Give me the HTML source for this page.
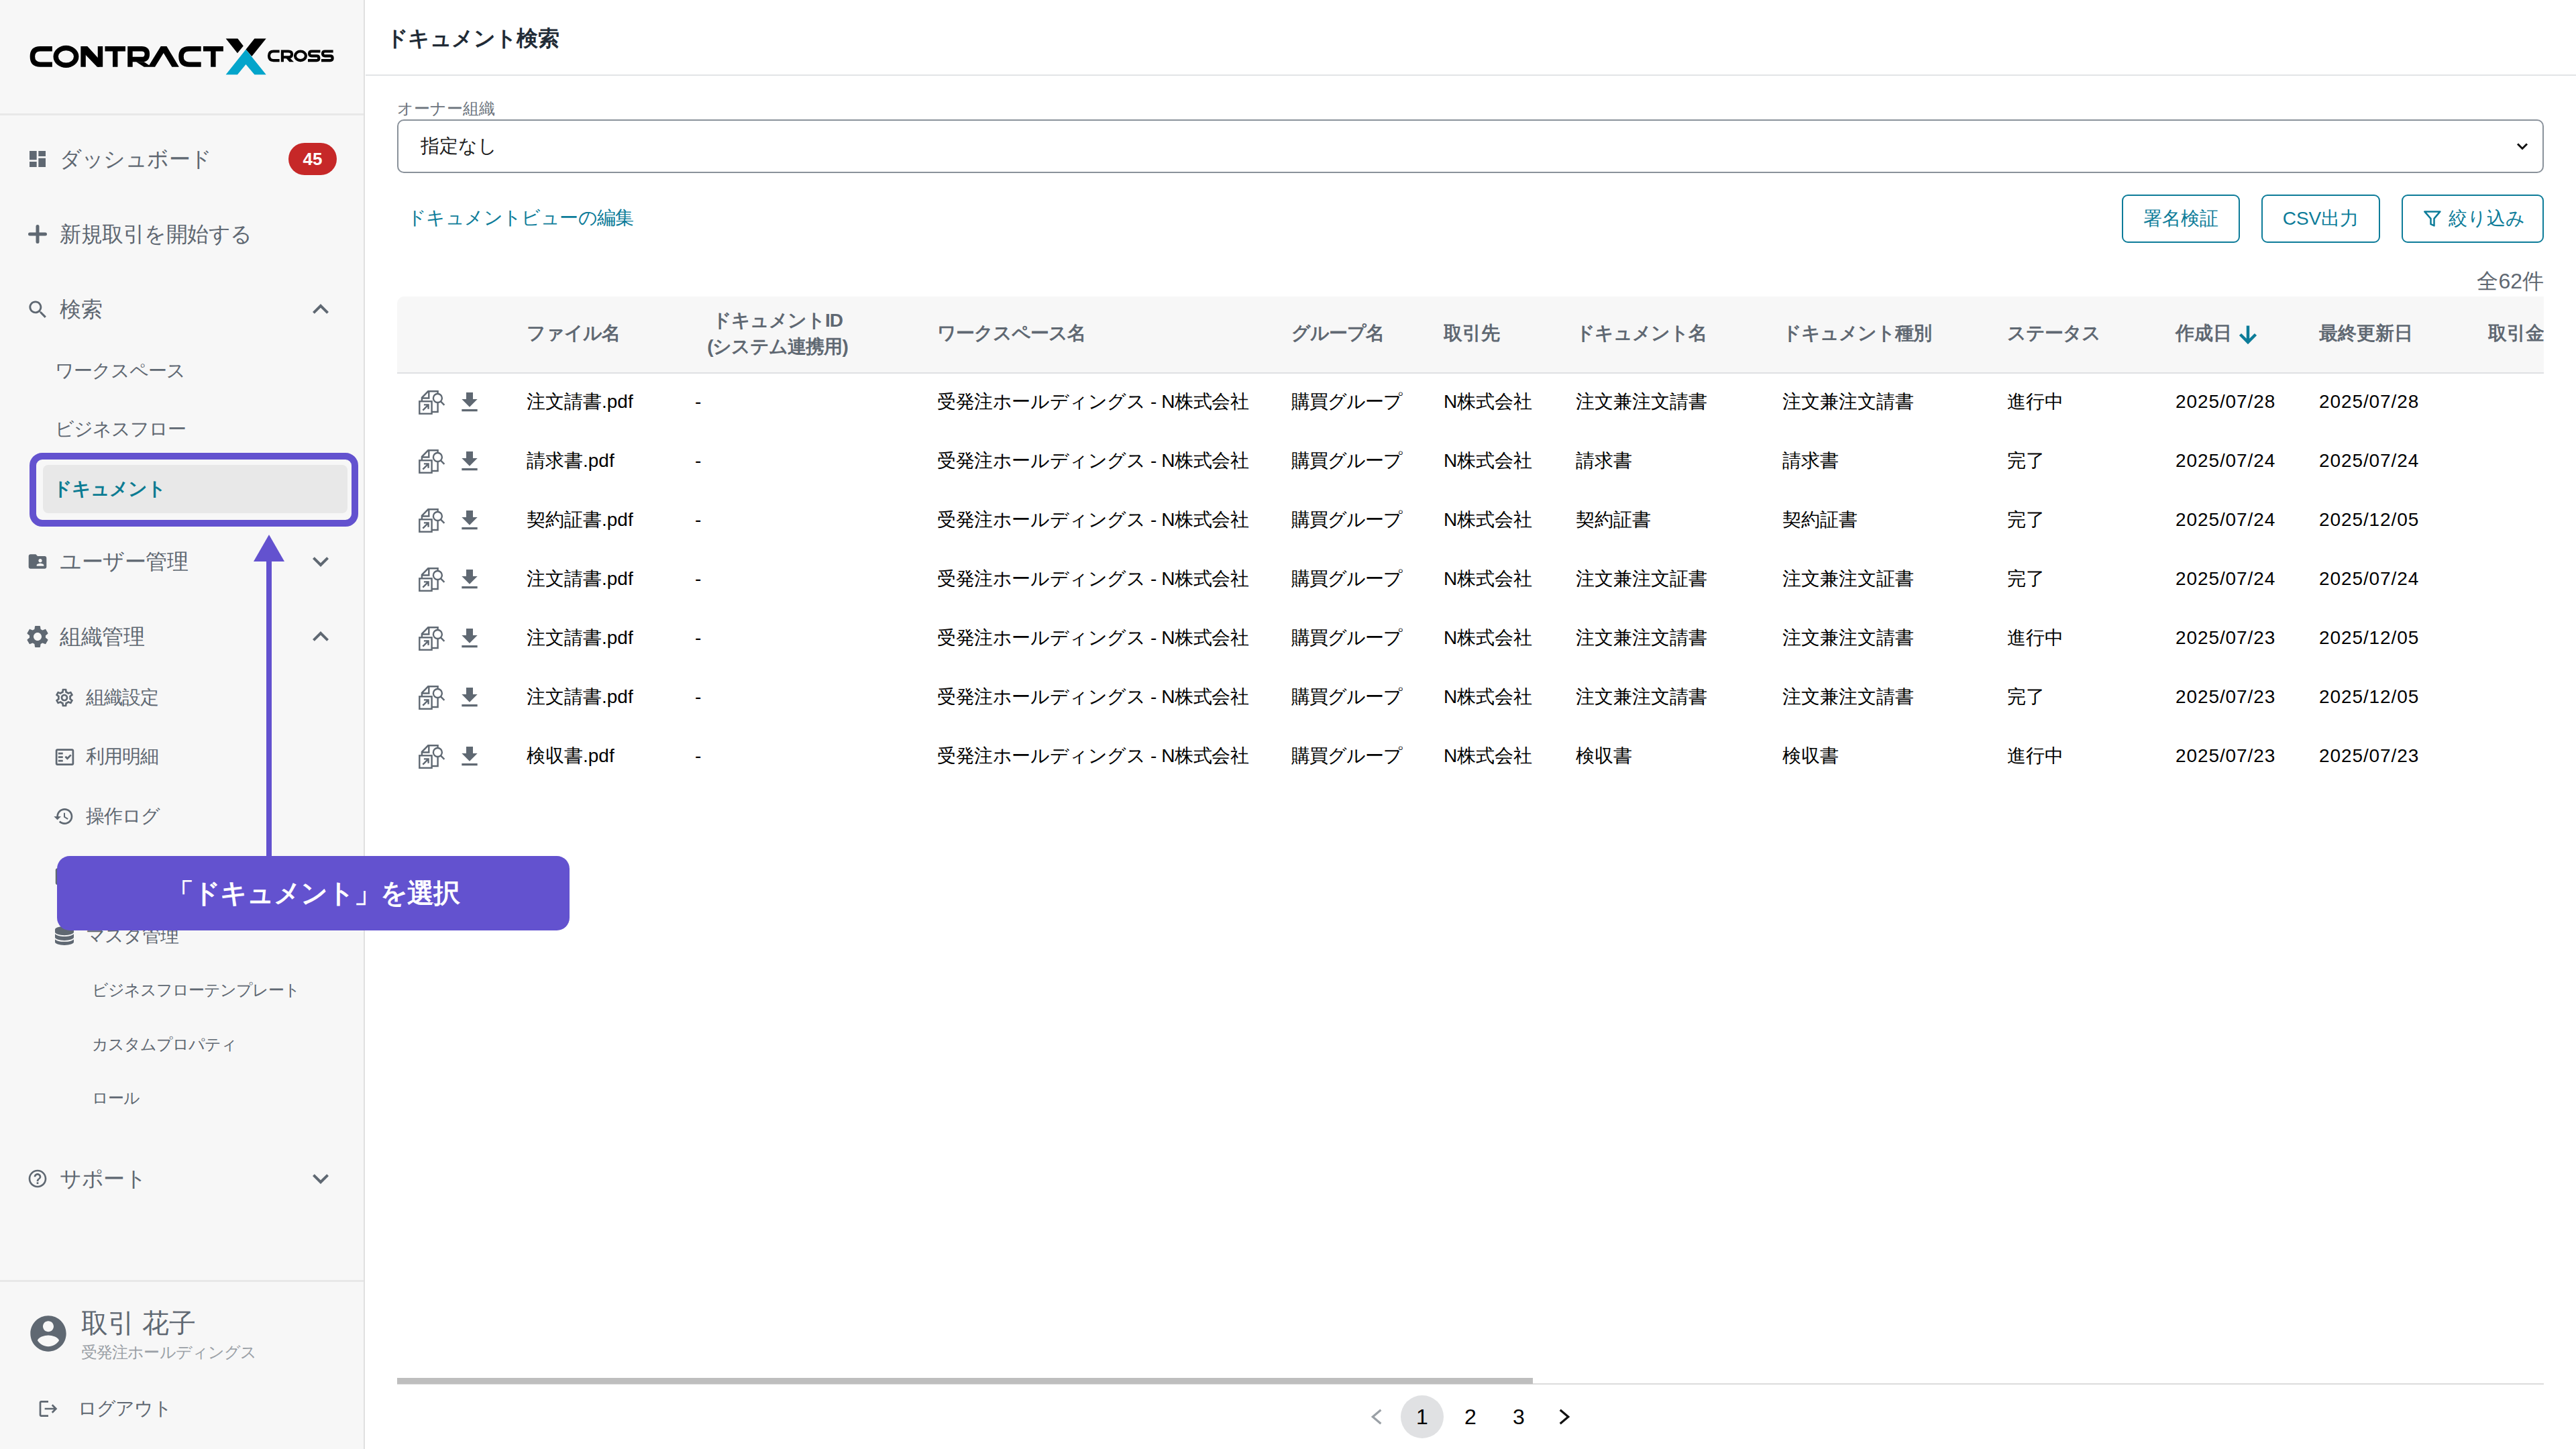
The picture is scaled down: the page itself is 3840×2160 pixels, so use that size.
<!DOCTYPE html>
<html lang="ja">
<head>
<meta charset="utf-8">
<title>ドキュメント検索</title>
<style>
*{box-sizing:border-box;margin:0;padding:0}
html,body{width:3840px;height:2160px;overflow:hidden;background:#fff}
body{font-family:"Liberation Sans",sans-serif;position:relative;color:#000}
.abs,.t,.m1,.m2,.m3,.th,.td,svg.i{position:absolute}
.t,.m1,.m2,.m3,.th,.td{white-space:nowrap}
#side{position:absolute;left:0;top:0;width:542px;height:2160px;background:#f7f7f7}
#sideb{position:absolute;left:542px;top:0;width:2px;height:2160px;background:#e0e0e0}
.hr{position:absolute;left:0;width:542px;height:3px;background:#e8e8e8}
.m1{font-size:32px;line-height:48px;color:#5f6872;left:89px;letter-spacing:-0.5px}
.m2{font-size:28px;line-height:44px;color:#5f6872;letter-spacing:-1px}
.m3{font-size:24px;line-height:40px;color:#5f6872;left:137px;letter-spacing:-1px}
svg.i{fill:#5f6872}
.th{font-size:28px;line-height:40px;font-weight:bold;color:#5f6872}
.td{font-size:28px;line-height:44px;color:#000}
.btn{position:absolute;top:290px;height:72px;border:2px solid #0d7c99;border-radius:9px;color:#0d7c99;font-size:28px;line-height:68px;text-align:center;white-space:nowrap}
.k{letter-spacing:-1px}.w{letter-spacing:-0.4px}.d{letter-spacing:0.9px}
</style>
</head>
<body>
<!-- SIDEBAR -->
<div id="side"></div>
<div id="sideb"></div>
<div class="hr" style="top:169px"></div>
<div class="hr" style="top:1908px"></div>
<svg class="abs" style="position:absolute;left:40px;top:55px" width="300" height="60" viewBox="0 0 2576 515">
<g fill="none" stroke="#000" stroke-width="64" stroke-linejoin="miter">
<path d="M325 152H170Q72 152 72 252Q72 353 170 353H325"/>
<ellipse cx="502" cy="252" rx="131" ry="111"/>
<path d="M722 385V120M940 385V120"/>
<path d="M1000 152H1262M1131 152V385"/>
<path d="M1322 385V152H1470Q1540 152 1540 220Q1540 288 1470 288H1322"/>
<path d="M2230 152H2075Q1975 152 1975 252Q1975 353 2075 353H2230"/>
<path d="M2258 152H2515M2386 152V385"/>
</g>
<path d="M700 120H775L930 290V385H900L700 175Z" fill="#000"/>
<path d="M1400 320H1500L1565 362L1715 120H1790L1948 385H1858L1750 205L1640 385H1500Z" fill="#000"/>
</svg>
<svg class="abs" style="position:absolute;left:320px;top:45px" width="190" height="80" viewBox="0 0 2576 1085">
<path d="M225 170H465L580 320L460 465Z" fill="#000"/>
<path d="M805 170H1040L750 530L630 390Z" fill="#000"/>
<path d="M630 390L1040 900H805L630 690L460 900H225Z" fill="#03a5cb"/>
<g fill="none" stroke="#000" stroke-width="56">
<path d="M1310 428H1190Q1098 428 1098 520Q1098 612 1190 612H1310"/>
<path d="M1368 640V428H1490Q1560 428 1560 487Q1560 546 1490 546H1368"/><path d="M1420 540H1500L1600 640H1510Z" fill="#000" stroke="none"/>
<ellipse cx="1735" cy="520" rx="108" ry="92"/>
<path d="M2135 428H1960Q1913 428 1913 474Q1913 520 1960 520H2060Q2107 520 2107 566Q2107 612 2060 612H1885"/>
<path d="M2395 428H2230Q2183 428 2183 474Q2183 520 2230 520H2335Q2382 520 2382 566Q2382 612 2335 612H2155"/>
</g>
</svg>
<svg class="i" style="left:40px;top:221px" width="32" height="32" viewBox="0 0 24 24"><path d="M3 13h8V3H3v10zm0 8h8v-6H3v6zm10 0h8V11h-8v10zm0-18v6h8V3h-8z"/></svg>
<div class="m1" style="top:213px">ダッシュボード</div>
<div class="abs" style="left:430px;top:213px;width:72px;height:48px;border-radius:24px;background:#c62828;color:#fff;font-weight:bold;font-size:26px;line-height:48px;text-align:center">45</div>
<svg class="i" style="left:40px;top:333px" width="32" height="32" viewBox="0 0 32 32"><path d="M16 4.500V27.500M4.500 16H27.500" stroke="#5f6872" stroke-width="5" stroke-linecap="round" fill="none"/></svg>
<div class="m1" style="top:325px">新規取引を開始する</div>
<svg class="i" style="left:39px;top:444px" width="35" height="35" viewBox="0 0 24 24"><path d="M15.5 14h-.79l-.28-.27C15.41 12.59 16 11.11 16 9.5 16 5.91 13.09 3 9.5 3S3 5.91 3 9.5 5.91 16 9.5 16c1.61 0 3.09-.59 4.23-1.57l.27.28v.79l5 4.99L20.49 19l-4.99-5zm-6 0C7.01 14 5 11.99 5 9.5S7.01 5 9.5 5 14 7.01 14 9.5 11.99 14 9.5 14z"/></svg>
<div class="m1" style="top:437px">検索</div>
<svg class="i" style="left:454px;top:437px" width="48" height="48" viewBox="0 0 24 24"><path d="M12 8l-6 6 1.41 1.41L12 10.83l4.59 4.58L18 14z"/></svg>
<div class="m2" style="top:531px;left:82px">ワークスペース</div>
<div class="m2" style="top:618px;left:82px">ビジネスフロー</div>
<div class="abs" style="left:44px;top:675px;width:490px;height:110px;border:10px solid #6352cf;border-radius:19px"></div>
<div class="abs" style="left:64px;top:693px;width:454px;height:72px;border-radius:8px;background:#e8e8e8"></div>
<div class="m2" style="top:707px;left:79px;color:#0b7b92;font-weight:bold">ドキュメント</div>
<svg class="i" style="left:40px;top:821px" width="32" height="32" viewBox="0 0 24 24"><path d="M20 6h-8l-2-2H4c-1.1 0-1.99.9-1.99 2L2 18c0 1.1.9 2 2 2h16c1.1 0 2-.9 2-2V8c0-1.1-.9-2-2-2zm-5 3c1.1 0 2 .9 2 2s-.9 2-2 2-2-.9-2-2 .9-2 2-2zm4 8h-8v-1c0-1.33 2.67-2 4-2s4 .67 4 2v1z"/></svg>
<div class="m1" style="top:813px">ユーザー管理</div>
<svg class="i" style="left:454px;top:813px" width="48" height="48" viewBox="0 0 24 24"><path d="M16.59 8.59L12 13.17 7.41 8.59 6 10l6 6 6-6z"/></svg>
<svg class="i" style="left:36px;top:929px" width="40" height="40" viewBox="0 0 24 24"><path d="M19.14 12.94c.04-.3.06-.61.06-.94 0-.32-.02-.64-.07-.94l2.03-1.58c.18-.14.23-.41.12-.61l-1.92-3.32c-.12-.22-.37-.29-.59-.22l-2.39.96c-.5-.38-1.03-.7-1.62-.94l-.36-2.54c-.04-.24-.24-.41-.48-.41h-3.84c-.24 0-.43.17-.47.41l-.36 2.54c-.59.24-1.13.57-1.62.94l-2.39-.96c-.22-.08-.47 0-.59.22L2.74 8.87c-.12.21-.08.47.12.61l2.03 1.58c-.05.3-.09.63-.09.94s.02.64.07.94l-2.03 1.58c-.18.14-.23.41-.12.61l1.92 3.32c.12.22.37.29.59.22l2.39-.96c.5.38 1.03.7 1.62.94l.36 2.54c.05.24.24.41.48.41h3.84c.24 0 .44-.17.47-.41l.36-2.54c.59-.24 1.13-.56 1.62-.94l2.39.96c.22.08.47 0 .59-.22l1.92-3.32c.12-.22.07-.47-.12-.61l-2.01-1.58zM12 15.6c-1.98 0-3.6-1.62-3.6-3.6s1.62-3.6 3.6-3.6 3.6 1.62 3.6 3.6-1.62 3.6-3.6 3.6z"/></svg>
<div class="m1" style="top:925px">組織管理</div>
<svg class="i" style="left:454px;top:925px" width="48" height="48" viewBox="0 0 24 24"><path d="M12 8l-6 6 1.41 1.41L12 10.83l4.59 4.58L18 14z"/></svg>
<svg class="i" style="left:80px;top:1024px" width="32" height="32" viewBox="0 0 24 24"><path d="M19.43 12.98c.04-.32.07-.64.07-.98 0-.34-.03-.66-.07-.98l2.11-1.65c.19-.15.24-.42.12-.64l-2-3.46c-.09-.16-.26-.25-.44-.25-.06 0-.12.01-.17.03l-2.49 1c-.52-.4-1.08-.73-1.69-.98l-.38-2.65C14.46 2.18 14.25 2 14 2h-4c-.25 0-.46.18-.49.42l-.38 2.65c-.61.25-1.17.59-1.69.98l-2.49-1c-.06-.02-.12-.03-.18-.03-.17 0-.34.09-.43.25l-2 3.46c-.13.22-.07.49.12.64l2.11 1.65c-.04.32-.07.65-.07.98 0 .33.03.66.07.98l-2.11 1.65c-.19.15-.24.42-.12.64l2 3.46c.09.16.26.25.44.25.06 0 .12-.01.17-.03l2.49-1c.52.4 1.08.73 1.69.98l.38 2.65c.03.24.24.42.49.42h4c.25 0 .46-.18.49-.42l.38-2.65c.61-.25 1.17-.59 1.69-.98l2.49 1c.06.02.12.03.18.03.17 0 .34-.09.43-.25l2-3.46c.12-.22.07-.49-.12-.64l-2.11-1.65zm-1.98-1.71c.04.31.05.52.05.73 0 .21-.02.43-.05.73l-.14 1.13.89.7 1.08.84-.7 1.21-1.27-.51-1.04-.42-.9.68c-.43.32-.84.56-1.25.73l-1.06.43-.16 1.13-.2 1.35h-1.4l-.19-1.35-.16-1.13-1.06-.43c-.43-.18-.83-.41-1.23-.71l-.91-.7-1.06.43-1.27.51-.7-1.21 1.08-.84.89-.7-.14-1.13c-.03-.31-.05-.54-.05-.74s.02-.43.05-.73l.14-1.13-.89-.7-1.08-.84.7-1.21 1.27.51 1.04.42.9-.68c.43-.32.84-.56 1.25-.73l1.06-.43.16-1.13.2-1.35h1.39l.19 1.35.16 1.13 1.06.43c.43.18.83.41 1.23.71l.91.7 1.06-.43 1.27-.51.7 1.21-1.07.85-.89.7.14 1.13zM12 8c-2.21 0-4 1.79-4 4s1.79 4 4 4 4-1.79 4-4-1.79-4-4-4zm0 6c-1.1 0-2-.9-2-2s.9-2 2-2 2 .9 2 2-.9 2-2 2z"/></svg>
<div class="m2" style="top:1018px;left:128px">組織設定</div>
<svg class="i" style="left:79.5px;top:1111.5px" width="33" height="33" viewBox="0 0 24 24"><path d="M20 3H4c-1.1 0-2 .9-2 2v14c0 1.1.9 2 2 2h16c1.1 0 2-.9 2-2V5c0-1.1-.9-2-2-2zm0 16H4V5h16v14zM19.41 10.42L17.99 9l-3.17 3.17-1.41-1.42L12 12.16 14.82 15zM5 7h5v2H5zM5 11h5v2H5zM5 15h5v2H5z"/></svg>
<div class="m2" style="top:1106px;left:128px">利用明細</div>
<svg class="i" style="left:79px;top:1201px" width="32" height="32" viewBox="0 0 24 24"><path d="M13 3c-4.97 0-9 4.03-9 9H1l3.89 3.89.07.14L9 12H6c0-3.87 3.13-7 7-7s7 3.13 7 7-3.13 7-7 7c-1.93 0-3.68-.79-4.94-2.06l-1.42 1.42C8.27 19.990 10.51 21 13 21c4.97 0 9-4.03 9-9s-4.03-9-9-9zm-1 5v5l4.28 2.54.72-1.21-3.5-2.08V8H12z"/></svg>
<div class="m2" style="top:1195px;left:128px">操作ログ</div>
<svg class="i" style="left:79.5px;top:1289.5px" width="33" height="33" viewBox="0 0 24 24"><path d="M20 3H4c-1.1 0-2 .9-2 2v14c0 1.1.9 2 2 2h16c1.1 0 2-.9 2-2V5c0-1.1-.9-2-2-2zm0 16H4V5h16v14zM19.41 10.42L17.99 9l-3.17 3.17-1.41-1.42L12 12.16 14.82 15zM5 7h5v2H5zM5 11h5v2H5zM5 15h5v2H5z"/></svg>
<div class="m2" style="top:1284px;left:128px">ワークフロー</div>
<svg class="i" style="left:82px;top:1381px" width="28" height="28" viewBox="4 3 16 18" preserveAspectRatio="none"><path d="M12 3C7.58 3 4 4.34 4 6v2.500C4 10.160 7.580 11.500 12 11.500S20 10.160 20 8.500V6c0-1.660-3.580-3-8-3zM4 10.300v3.200c0 1.660 3.580 3 8 3s8-1.340 8-3v-3.200c-1.300 1.500-4.500 2.400-8 2.400s-6.700-.9-8-2.400zM4 15.300V18c0 1.660 3.580 3 8 3s8-1.340 8-3v-2.700c-1.300 1.500-4.500 2.400-8 2.400s-6.700-.9-8-2.400z"/></svg>
<div class="m2" style="top:1373px;left:128px">マスタ管理</div>
<div class="m3" style="top:1456px">ビジネスフローテンプレート</div>
<div class="m3" style="top:1537px">カスタムプロパティ</div>
<div class="m3" style="top:1617px">ロール</div>
<svg class="i" style="left:40px;top:1741px" width="32" height="32" viewBox="0 0 24 24"><path d="M11 18h2v-2h-2v2zm1-16C6.48 2 2 6.48 2 12s4.48 10 10 10 10-4.48 10-10S17.520 2 12 2zm0 18c-4.410 0-8-3.590-8-8s3.590-8 8-8 8 3.590 8 8-3.590 8-8 8zm0-14c-2.210 0-4 1.790-4 4h2c0-1.100.9-2 2-2s2 .9 2 2c0 2-3 1.750-3 5h2c0-2.250 3-2.500 3-5 0-2.210-1.790-4-4-4z"/></svg>
<div class="m1" style="top:1733px">サポート</div>
<svg class="i" style="left:454px;top:1733px" width="48" height="48" viewBox="0 0 24 24"><path d="M16.59 8.59L12 13.17 7.41 8.59 6 10l6 6 6-6z"/></svg>
<svg class="i" style="left:40px;top:1955.5px" width="64" height="64" viewBox="0 0 24 24"><path d="M12 2C6.48 2 2 6.48 2 12s4.48 10 10 10 10-4.48 10-10S17.52 2 12 2zm0 3c1.66 0 3 1.34 3 3s-1.34 3-3 3-3-1.34-3-3 1.340-3 3-3zm0 14.200c-2.500 0-4.710-1.280-6-3.220.03-1.990 4-3.080 6-3.080 1.990 0 5.970 1.090 6 3.080-1.290 1.940-3.500 3.220-6 3.220z"/></svg>
<div class="t" style="left:121px;top:1944px;font-size:40px;line-height:56px;color:#5f6872">取引 花子</div>
<div class="t" style="left:121px;top:1998px;font-size:24px;line-height:36px;color:#9aa0a6;letter-spacing:-0.9px">受発注ホールディングス</div>
<svg class="i" style="left:55.5px;top:2084px" width="32" height="32" viewBox="0 0 24 24"><path d="M17 7l-1.410 1.410L18.170 11H8v2h10.170l-2.580 2.580L17 17l5-5zM4 5h8V3H4c-1.100 0-2 .9-2 2v14c0 1.100.9 2 2 2h8v-2H4V5z"/></svg>
<div class="m2" style="top:2078px;left:116px">ログアウト</div>
<!-- MAIN -->
<svg width="0" height="0" style="position:absolute"><defs><g id="pv" fill="none" stroke="#5f6872" stroke-width="2.400">
<path d="M30.600 7.500V4.300H16.200L6.900 13.800V19"/><path d="M17.300 4.300V14.500H6.900"/><path d="M30.600 21.500V35H22"/>
<rect x="3.300" y="19.300" width="18.300" height="18.400"/><path d="M8.300 32.700L16.600 24.400M9.900 24.400H16.600V30.800"/>
<circle cx="30.400" cy="14.500" r="6.500"/><path d="M35.200 19.600L40.400 24.800"/></g></defs></svg>
<div class="t" style="left:576px;top:33px;font-size:32px;line-height:48px;font-weight:bold;color:#212b36;letter-spacing:-0.6px">ドキュメント検索</div>
<div class="abs" style="left:545px;top:111px;width:3295px;height:2px;background:#e2e4e6"></div>
<div class="t" style="left:592px;top:144px;font-size:24px;line-height:36px;color:#6b737c">オーナー組織</div>
<div class="abs" style="left:592px;top:178px;width:3200px;height:80px;border:2px solid #8a929b;border-radius:10px;background:#fff"></div>
<div class="t" style="left:627px;top:196px;font-size:28px;line-height:44px;color:#1c1c1c">指定なし</div>
<svg class="i" style="left:3748px;top:209px" width="24" height="18" viewBox="0 0 24 18"><path d="M5 5.500L12 12.500L19 5.500" fill="none" stroke="#111" stroke-width="3"/></svg>
<div class="t" style="left:607px;top:303px;font-size:28px;line-height:44px;color:#0d7c99;letter-spacing:-0.6px">ドキュメントビューの編集</div>
<div class="btn" style="left:3163px;width:176px">署名検証</div>
<div class="btn" style="left:3371px;width:177px">CSV出力</div>
<div class="btn" style="left:3580px;width:212px;text-align:left;padding-left:68px">絞り込み</div>
<svg class="i" style="left:3609px;top:310px" width="34" height="32" viewBox="0 0 34 32"><path d="M5.300 5.400H28.400L19.500 15.900V26.400L14.500 24.200V15.900Z" fill="none" stroke="#0d7c99" stroke-width="2.500" stroke-linejoin="round"/></svg>
<div class="t" style="right:48px;top:395px;font-size:32px;line-height:48px;color:#5f6872">全62件</div>
<div class="abs" style="left:592px;top:442px;width:3200px;height:113px;background:#f7f7f7;border-radius:10px 0 0 0"></div>
<div class="abs" style="left:592px;top:555px;width:3200px;height:2px;background:#dfe1e3"></div>
<div class="th k" style="left:785px;top:477px;">ファイル名</div>
<div class="th k" style="left:1009px;top:458px;width:300px;text-align:center;line-height:39px">ドキュメントID<br>(システム連携用)</div>
<div class="th k" style="left:1397px;top:477px;">ワークスペース名</div>
<div class="th k" style="left:1925px;top:477px;">グループ名</div>
<div class="th" style="left:2152px;top:477px;">取引先</div>
<div class="th k" style="left:2349px;top:477px;">ドキュメント名</div>
<div class="th k" style="left:2657px;top:477px;">ドキュメント種別</div>
<div class="th k" style="left:2992px;top:477px;">ステータス</div>
<div class="th" style="left:3243px;top:477px;">作成日</div>
<svg class="i" style="left:3333px;top:480px" width="36" height="36" viewBox="0 0 36 36"><path d="M18 5.500V29M6.500 18.500L18 30L29.500 18.500" fill="none" stroke="#0d7c99" stroke-width="4.500"/></svg>
<div class="th" style="left:3457px;top:477px;">最終更新日</div>
<div class="abs" style="left:3700px;top:470px;width:92px;height:60px;overflow:hidden"><div class="th" style="left:9px;top:7px">取引金額</div></div>
<svg class="i" style="left:622px;top:579px" width="42" height="40"><use href="#pv"/></svg>
<svg class="i" style="left:680px;top:580px" width="40" height="40" viewBox="0 0 24 24"><path d="M19 9h-4V3H9v6H5l7 7 7-7zM5 18v2h14v-2H5z"/></svg>
<div class="td" style="left:785px;top:577px">注文請書.pdf</div>
<div class="td" style="left:1036px;top:577px">-</div>
<div class="td w" style="left:1397px;top:577px">受発注ホールディングス - N株式会社</div>
<div class="td k" style="left:1925px;top:577px">購買グループ</div>
<div class="td" style="left:2152px;top:577px">N株式会社</div>
<div class="td" style="left:2349px;top:577px">注文兼注文請書</div>
<div class="td" style="left:2657px;top:577px">注文兼注文請書</div>
<div class="td" style="left:2992px;top:577px">進行中</div>
<div class="td d" style="left:3243px;top:577px">2025/07/28</div>
<div class="td d" style="left:3457px;top:577px">2025/07/28</div>
<svg class="i" style="left:622px;top:667px" width="42" height="40"><use href="#pv"/></svg>
<svg class="i" style="left:680px;top:668px" width="40" height="40" viewBox="0 0 24 24"><path d="M19 9h-4V3H9v6H5l7 7 7-7zM5 18v2h14v-2H5z"/></svg>
<div class="td" style="left:785px;top:665px">請求書.pdf</div>
<div class="td" style="left:1036px;top:665px">-</div>
<div class="td w" style="left:1397px;top:665px">受発注ホールディングス - N株式会社</div>
<div class="td k" style="left:1925px;top:665px">購買グループ</div>
<div class="td" style="left:2152px;top:665px">N株式会社</div>
<div class="td" style="left:2349px;top:665px">請求書</div>
<div class="td" style="left:2657px;top:665px">請求書</div>
<div class="td" style="left:2992px;top:665px">完了</div>
<div class="td d" style="left:3243px;top:665px">2025/07/24</div>
<div class="td d" style="left:3457px;top:665px">2025/07/24</div>
<svg class="i" style="left:622px;top:755px" width="42" height="40"><use href="#pv"/></svg>
<svg class="i" style="left:680px;top:756px" width="40" height="40" viewBox="0 0 24 24"><path d="M19 9h-4V3H9v6H5l7 7 7-7zM5 18v2h14v-2H5z"/></svg>
<div class="td" style="left:785px;top:753px">契約証書.pdf</div>
<div class="td" style="left:1036px;top:753px">-</div>
<div class="td w" style="left:1397px;top:753px">受発注ホールディングス - N株式会社</div>
<div class="td k" style="left:1925px;top:753px">購買グループ</div>
<div class="td" style="left:2152px;top:753px">N株式会社</div>
<div class="td" style="left:2349px;top:753px">契約証書</div>
<div class="td" style="left:2657px;top:753px">契約証書</div>
<div class="td" style="left:2992px;top:753px">完了</div>
<div class="td d" style="left:3243px;top:753px">2025/07/24</div>
<div class="td d" style="left:3457px;top:753px">2025/12/05</div>
<svg class="i" style="left:622px;top:843px" width="42" height="40"><use href="#pv"/></svg>
<svg class="i" style="left:680px;top:844px" width="40" height="40" viewBox="0 0 24 24"><path d="M19 9h-4V3H9v6H5l7 7 7-7zM5 18v2h14v-2H5z"/></svg>
<div class="td" style="left:785px;top:841px">注文請書.pdf</div>
<div class="td" style="left:1036px;top:841px">-</div>
<div class="td w" style="left:1397px;top:841px">受発注ホールディングス - N株式会社</div>
<div class="td k" style="left:1925px;top:841px">購買グループ</div>
<div class="td" style="left:2152px;top:841px">N株式会社</div>
<div class="td" style="left:2349px;top:841px">注文兼注文証書</div>
<div class="td" style="left:2657px;top:841px">注文兼注文証書</div>
<div class="td" style="left:2992px;top:841px">完了</div>
<div class="td d" style="left:3243px;top:841px">2025/07/24</div>
<div class="td d" style="left:3457px;top:841px">2025/07/24</div>
<svg class="i" style="left:622px;top:931px" width="42" height="40"><use href="#pv"/></svg>
<svg class="i" style="left:680px;top:932px" width="40" height="40" viewBox="0 0 24 24"><path d="M19 9h-4V3H9v6H5l7 7 7-7zM5 18v2h14v-2H5z"/></svg>
<div class="td" style="left:785px;top:929px">注文請書.pdf</div>
<div class="td" style="left:1036px;top:929px">-</div>
<div class="td w" style="left:1397px;top:929px">受発注ホールディングス - N株式会社</div>
<div class="td k" style="left:1925px;top:929px">購買グループ</div>
<div class="td" style="left:2152px;top:929px">N株式会社</div>
<div class="td" style="left:2349px;top:929px">注文兼注文請書</div>
<div class="td" style="left:2657px;top:929px">注文兼注文請書</div>
<div class="td" style="left:2992px;top:929px">進行中</div>
<div class="td d" style="left:3243px;top:929px">2025/07/23</div>
<div class="td d" style="left:3457px;top:929px">2025/12/05</div>
<svg class="i" style="left:622px;top:1019px" width="42" height="40"><use href="#pv"/></svg>
<svg class="i" style="left:680px;top:1020px" width="40" height="40" viewBox="0 0 24 24"><path d="M19 9h-4V3H9v6H5l7 7 7-7zM5 18v2h14v-2H5z"/></svg>
<div class="td" style="left:785px;top:1017px">注文請書.pdf</div>
<div class="td" style="left:1036px;top:1017px">-</div>
<div class="td w" style="left:1397px;top:1017px">受発注ホールディングス - N株式会社</div>
<div class="td k" style="left:1925px;top:1017px">購買グループ</div>
<div class="td" style="left:2152px;top:1017px">N株式会社</div>
<div class="td" style="left:2349px;top:1017px">注文兼注文請書</div>
<div class="td" style="left:2657px;top:1017px">注文兼注文請書</div>
<div class="td" style="left:2992px;top:1017px">完了</div>
<div class="td d" style="left:3243px;top:1017px">2025/07/23</div>
<div class="td d" style="left:3457px;top:1017px">2025/12/05</div>
<svg class="i" style="left:622px;top:1107px" width="42" height="40"><use href="#pv"/></svg>
<svg class="i" style="left:680px;top:1108px" width="40" height="40" viewBox="0 0 24 24"><path d="M19 9h-4V3H9v6H5l7 7 7-7zM5 18v2h14v-2H5z"/></svg>
<div class="td" style="left:785px;top:1105px">検収書.pdf</div>
<div class="td" style="left:1036px;top:1105px">-</div>
<div class="td w" style="left:1397px;top:1105px">受発注ホールディングス - N株式会社</div>
<div class="td k" style="left:1925px;top:1105px">購買グループ</div>
<div class="td" style="left:2152px;top:1105px">N株式会社</div>
<div class="td" style="left:2349px;top:1105px">検収書</div>
<div class="td" style="left:2657px;top:1105px">検収書</div>
<div class="td" style="left:2992px;top:1105px">進行中</div>
<div class="td d" style="left:3243px;top:1105px">2025/07/23</div>
<div class="td d" style="left:3457px;top:1105px">2025/07/23</div>
<div class="abs" style="left:592px;top:2062px;width:3200px;height:2px;background:#dcdcdc"></div>
<div class="abs" style="left:592px;top:2054px;width:1693px;height:9px;background:#bebebe"></div>
<svg class="i" style="left:2040px;top:2096px" width="24" height="32" viewBox="0 0 24 32"><path d="M18.400 5.800L6.300 16L18.400 26.300" fill="none" stroke="#9aa0a6" stroke-width="3.200"/></svg>
<div class="abs" style="left:2088px;top:2080px;width:64px;height:64px;border-radius:32px;background:#e0e1e3"></div>
<div class="t" style="left:2090px;top:2090px;width:60px;text-align:center;font-size:32px;line-height:44px;color:#000">1</div>
<div class="t" style="left:2162px;top:2090px;width:60px;text-align:center;font-size:32px;line-height:44px;color:#000">2</div>
<div class="t" style="left:2234px;top:2090px;width:60px;text-align:center;font-size:32px;line-height:44px;color:#000">3</div>
<svg class="i" style="left:2320px;top:2096px" width="24" height="32" viewBox="0 0 24 32"><path d="M5.700 5.800L17.800 16L5.700 26.300" fill="none" stroke="#111" stroke-width="3.200"/></svg>
<div class="abs" style="left:397px;top:830px;width:8px;height:450px;background:#6352cf"></div>
<svg class="abs" style="position:absolute;left:377px;top:797px" width="48" height="40" viewBox="0 0 48 40"><path d="M24 0L47 40H1Z" fill="#6352cf"/></svg>
<div class="t" style="left:85px;top:1276px;width:764px;height:111px;border-radius:19px;background:#6352cf;color:#fff;font-weight:bold;font-size:40px;line-height:111px;text-align:center;letter-spacing:-1px">「ドキュメント」を選択</div>
</body>
</html>
